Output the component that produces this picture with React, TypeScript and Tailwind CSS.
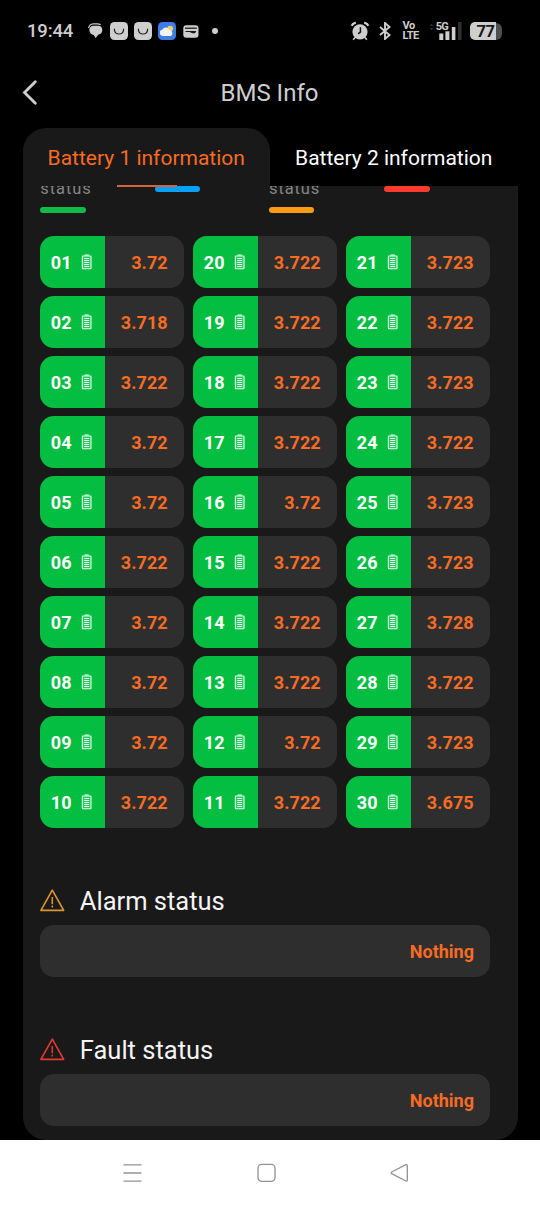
const columns: [string, string][][] = [
  [['01', '3.72'], ['02', '3.718'], ['03', '3.722'], ['04', '3.72'], ['05', '3.72'], ['06', '3.722'], ['07', '3.72'], ['08', '3.72'], ['09', '3.72'], ['10', '3.722']],
  [['20', '3.722'], ['19', '3.722'], ['18', '3.722'], ['17', '3.722'], ['16', '3.72'], ['15', '3.722'], ['14', '3.722'], ['13', '3.722'], ['12', '3.72'], ['11', '3.722']],
  [['21', '3.723'], ['22', '3.722'], ['23', '3.723'], ['24', '3.722'], ['25', '3.723'], ['26', '3.723'], ['27', '3.728'], ['28', '3.722'], ['29', '3.723'], ['30', '3.675']],
];

function SmileIcon() {
  return (
    <svg className="h-[18px] w-[18px]" viewBox="0 0 18 18">
      <rect width="18" height="18" rx="4.5" fill="#cfcfcf" />
      <path d="M4.4 7.2c.2 6.4 9 6.4 9.2 0" fill="none" stroke="#222" strokeWidth="1.2" strokeLinecap="round" />
    </svg>
  );
}

function StatusBar() {
  return (
    <div className="flex h-[62px] shrink-0 items-center pl-[27px] text-[#cecece]">
      <span className="w-[61px] text-[18.5px] font-medium leading-none tracking-[-0.15px]">19:44</span>
      <svg className="h-[16px] w-[15px]" viewBox="0 0 15 16">
        <path d="M1.3 7Q1.5 2.9 5.6 2.7h4.8q3.8.2 3.9 4.2 0 3.8-3.8 4.6L7.6 14.9 5.8 12Q1.8 11.4 1.3 7Z" fill="#cecece" />
        <path d="M.6 5.2Q1.2 1.1 5.2.8h4q2.2 0 3.4 1" fill="none" stroke="#cecece" strokeWidth="1.2" />
      </svg>
      <div className="ml-[7px] flex gap-[6px]">
        <SmileIcon />
        <SmileIcon />
        <svg className="h-[18px] w-[18px]" viewBox="0 0 18 18">
          <rect width="18" height="18" rx="4.5" fill="#3d7de8" />
          <circle cx="12.2" cy="6.6" r="2.9" fill="#efd15b" />
          <path d="M5 14a3.3 3.3 0 0 1-.6-6.5A4 4 0 0 1 11.5 8a3.2 3.2 0 0 1 1.2 6Z" fill="#f2f2ef" />
        </svg>
      </div>
      <svg className="ml-[7px] h-[13px] w-[16px]" viewBox="0 0 16 13">
        <rect x=".3" y=".3" width="15.2" height="12.4" rx="3" fill="#cecece" />
        <path d="M2 3.2h11.8" stroke="#181818" strokeWidth="1.3" />
        <path d="M2.5 6h10.8L12.2 8q-1.8.6-3.6 0L6.8 7H2.5Z" fill="#181818" />
      </svg>
      <span className="ml-[12.5px] h-[6px] w-[6px] rounded-full bg-[#cecece]" />
      <svg className="ml-[132px] h-[20px] w-[20px]" viewBox="0 0 20 20" fill="none" stroke="#cecece">
        <circle cx="10" cy="10.8" r="7.6" fill="#cecece" stroke="none" />
        <path d="M1.6 4.8Q2.6 2.5 5.8 1.7M18.4 4.8Q17.4 2.5 14.2 1.7" strokeWidth="2.3" />
        <path d="m5 16.5-1.8 2.2M15 16.5l1.8 2.2" strokeWidth="1.6" />
        <path d="M10.4 6.2v5L8.1 12.8" stroke="#111" strokeWidth="1.5" />
      </svg>
      <svg className="ml-[9.5px] h-[18px] w-[12px]" viewBox="0 0 12 18">
        <path d="m1 5 9.5 8L6 17V1l4.5 4L1 13" fill="none" stroke="#cecece" strokeWidth="1.9" />
      </svg>
      <div className="ml-[11.5px] w-[18px] text-[11px] font-bold leading-[10px] tracking-[-0.5px]">
        <div>Vo</div>
        <div>LTE</div>
      </div>
      <svg className="ml-[8px] h-[20px] w-[34px]" viewBox="0 0 34 20">
        <path d="m.5 5 2-2.2 2 2.2ZM.5 7l2 2.2 2-2.2Z" fill="#303030" />
        <text x="6.8" y="8.8" fontSize="11" fontWeight="700" letterSpacing="-.9" fill="#cecece">5G</text>
        <path d="M10.3 12.5h4v6.5h-4ZM16.4 10.2h4v8.8h-4ZM22.8 6h3.6v13h-3.6Z" fill="#cecece" />
        <path d="M29 1h3.6v18H29Z" fill="#303030" />
      </svg>
      <div className="ml-[7px] flex items-center">
        <div className="flex h-[18px] w-[26px] items-center justify-end rounded-l-[5px] bg-[#cecece] pr-[1px] pt-[2px] text-[16.5px] font-bold leading-none tracking-[-0.5px] text-[#181818]">77</div>
        <div className="h-[17px] w-[6px] rounded-r-[6px] bg-[#505050]" />
      </div>
    </div>
  );
}

function BatteryIcon() {
  return (
    <svg className="h-[16px] w-[11px]" viewBox="0 0 11 16" fill="none" stroke="#e9fff0">
      <rect x="1.4" y="2" width="8.6" height="12.7" rx=".5" fill="#e9fff0" fillOpacity=".15" strokeWidth="1.1" />
      <path d="M3.6 1.1h4.2" strokeWidth="1.4" />
      <path d="M3.2 4.5h5M3.2 6.5h5M3.2 8.5h5M3.2 10.5h5M3.2 12.5h5" strokeWidth="1.1" />
    </svg>
  );
}

function Cell({ id, value }: { id: string; value: string }) {
  return (
    <div className="flex h-[52.5px] overflow-hidden rounded-[14px] bg-[#2e2e2e] text-[18px] font-bold tracking-[0.1px]">
      <div className="flex w-[64.5px] items-center bg-[#04be42] pl-[10.5px] text-white">
        <span className="w-[30.5px] pt-[1px] tracking-[0.1px]">{id}</span>
        <BatteryIcon />
      </div>
      <div className="flex flex-1 items-center justify-end pr-[16.5px] pt-[1px] text-[#f76b23]">{value}</div>
    </div>
  );
}

function StatusSection({ title, color }: { title: string; color: string }) {
  return (
    <section>
      <div className="flex h-[48px] items-center">
        <svg className="h-[24px] w-[25px]" viewBox="0 0 25 24" fill="none" stroke={color}>
          <path d="M12.3 1.2 23.7 21.4H.9Z" strokeWidth="1.6" strokeLinejoin="round" />
          <path d="M12.3 8v7.2M12.3 16.6v2" strokeWidth="1.5" />
        </svg>
        <h2 className="ml-[14.5px] pt-[2px] text-[25.5px] leading-none text-[#f4f4f4]">{title}</h2>
      </div>
      <div className="flex h-[52.5px] items-center justify-end rounded-[14px] bg-[#2e2e2e] pr-[16.3px] pt-[2px] text-[18px] font-bold text-[#f76b23]">
        Nothing
      </div>
    </section>
  );
}

export default function App() {
  return (
    <div className="flex h-[1206px] w-[540px] flex-col overflow-hidden bg-black font-['Roboto',sans-serif]">
      <StatusBar />
      <header className="flex h-[66px] shrink-0 items-center pb-[4px] pl-[22px] text-[#cecece]">
        <svg className="h-[26px] w-[16px]" viewBox="0 0 16 26">
          <path d="M13.3 1.8 2.5 12.5l10.8 10.7" fill="none" stroke="#cecece" strokeWidth="2.8" strokeLinecap="round" />
        </svg>
        <h1 className="ml-[182.5px] text-[24px] leading-none">BMS Info</h1>
      </header>
      <nav className="mx-[22.5px] flex h-[58px] shrink-0 text-[21px]">
        <div className="relative flex w-[247.5px] items-center justify-center rounded-t-[23px] bg-[#191919] pt-[4px] text-[#f76b23]">
          Battery 1 information
          <span className="absolute bottom-[-1px] left-[94px] z-10 h-[2px] w-[60px] bg-[#d6623e]" />
        </div>
        <div className="flex w-[247.5px] items-center justify-center pt-[4px] text-white">Battery 2 information</div>
      </nav>
      <main className="mx-[22.5px] h-[954px] shrink-0 rounded-b-[23px] bg-[#191919] px-[17.8px]">
        <div className="flex h-[49.5px] overflow-hidden">
          <div className="w-[114.7px]">
            <div className="mt-[-7px] h-[20px] text-[16.5px] leading-[20px] tracking-[0.9px] text-[#858585]">status</div>
            <div className="mt-[8px] h-[6px] w-[45.5px] rounded-full bg-[#12ba47]" />
          </div>
          <div className="h-[6px] w-[45.5px] rounded-full bg-[#06a0f5]" />
          <div className="ml-[68.5px] w-[115.5px]">
            <div className="mt-[-7px] h-[20px] text-[16.5px] leading-[20px] tracking-[0.9px] text-[#858585]">status</div>
            <div className="mt-[8px] h-[6px] w-[45.5px] rounded-full bg-[#fa9c13]" />
          </div>
          <div className="h-[6px] w-[45.5px] rounded-full bg-[#fa3b2d]" />
        </div>
        <div className="flex w-[450px] gap-[9px]">
          {columns.map((cells) => (
            <div key={cells[0][0]} className="flex w-[144px] flex-col gap-[7.5px]">
              {cells.map(([id, value]) => (
                <Cell key={id} id={id} value={value} />
              ))}
            </div>
          ))}
        </div>
        <div className="mt-[48.5px] flex w-[450px] flex-col gap-[48.5px]">
          <StatusSection title="Alarm status" color="#df962e" />
          <StatusSection title="Fault status" color="#e43b30" />
        </div>
      </main>
      <div className="flex h-[66px] shrink-0 items-center bg-white pl-[122px]">
        <svg className="h-[20px] w-[20px]" viewBox="0 0 20 20">
          <path d="M1.5 1.8h18M1.5 10h18M1.5 18.2h18" stroke="#929292" strokeWidth="1.3" />
        </svg>
        <svg className="ml-[115px] h-[20px] w-[20px]" viewBox="0 0 20 20">
          <rect x="1" y="1.3" width="17" height="17" rx="3.8" fill="none" stroke="#929292" strokeWidth="1.3" />
        </svg>
        <svg className="ml-[113px] h-[20px] w-[20px]" viewBox="0 0 20 20">
          <path d="M1.7 9 15.8 1.7q1.5-.4 1.5 1.2v14q0 1.6-1.5 1.1L1.7 10.7q-1-.8 0-1.7Z" fill="none" stroke="#929292" strokeWidth="1.3" />
        </svg>
      </div>
    </div>
  );
}
